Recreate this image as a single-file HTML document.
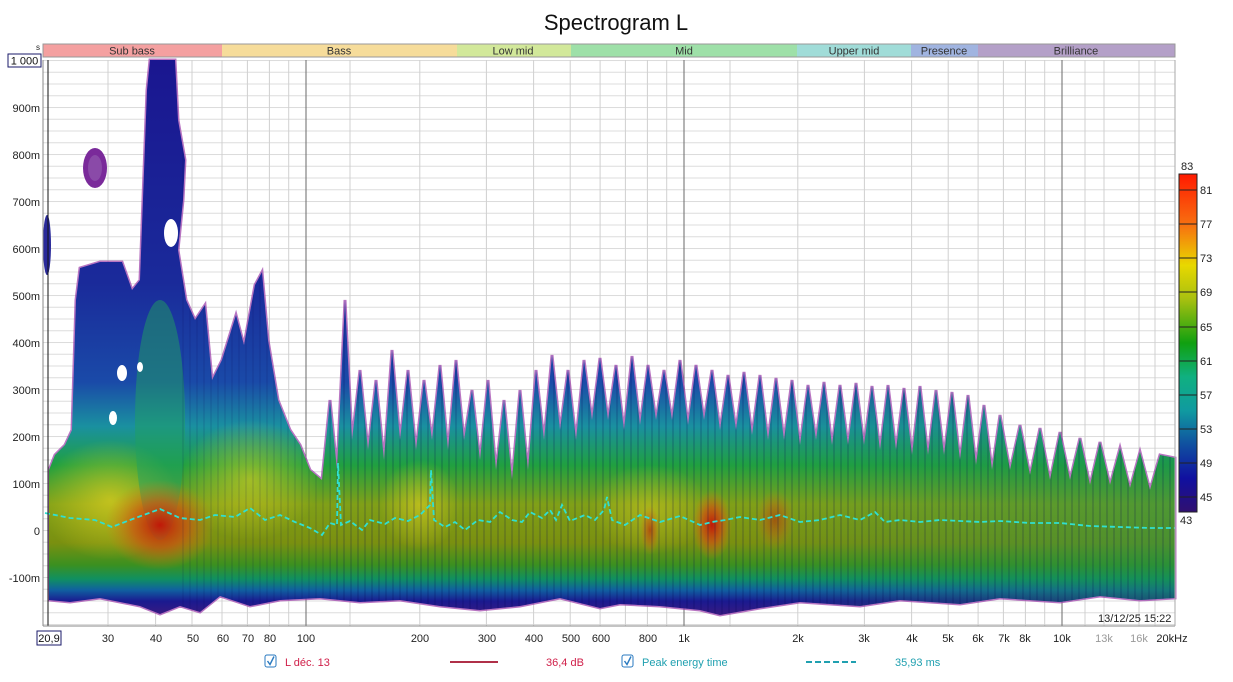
<!DOCTYPE html>
<html><head><meta charset="utf-8"><style>
html,body{margin:0;padding:0;background:#fff;}
body{width:1233px;height:677px;overflow:hidden;font-family:"Liberation Sans",sans-serif;}
</style></head><body>
<svg width="1233" height="677" viewBox="0 0 1233 677" xmlns="http://www.w3.org/2000/svg" font-family="Liberation Sans, sans-serif">
<defs>
<pattern id="hg" patternUnits="userSpaceOnUse" x="0" y="60" width="10" height="11.75"><line x1="0" y1="0.5" x2="10" y2="0.5" stroke="#dcdcdc" stroke-width="1"/></pattern>
<pattern id="st" patternUnits="userSpaceOnUse" width="7" height="10"><rect x="0" y="0" width="2" height="10" fill="rgba(0,0,80,0.15)"/></pattern>
<linearGradient id="vg" gradientUnits="userSpaceOnUse" x1="0" y1="60" x2="0" y2="615">
<stop offset="0" stop-color="#1a1690"/><stop offset="0.4" stop-color="#1a2a9a"/><stop offset="0.58" stop-color="#1a4aa8"/>
<stop offset="0.66" stop-color="#1a90a0"/><stop offset="0.73" stop-color="#20a040"/><stop offset="0.8" stop-color="#80a018"/>
<stop offset="0.87" stop-color="#7a9010"/><stop offset="0.91" stop-color="#3a9020"/><stop offset="0.935" stop-color="#109060"/>
<stop offset="0.955" stop-color="#1060a0"/><stop offset="0.975" stop-color="#1a1a90"/><stop offset="1" stop-color="#3a1a80"/></linearGradient>
<linearGradient id="rg" gradientUnits="userSpaceOnUse" x1="750" y1="0" x2="1175" y2="0">
<stop offset="0" stop-color="#1a9050" stop-opacity="0"/><stop offset="1" stop-color="#1a9050" stop-opacity="0.5"/></linearGradient>
<radialGradient id="red"><stop offset="0" stop-color="#c01808"/><stop offset="0.5" stop-color="#d05010" stop-opacity="0.7"/><stop offset="1" stop-color="#d08010" stop-opacity="0"/></radialGradient>
<radialGradient id="yel"><stop offset="0" stop-color="#e0d020"/><stop offset="1" stop-color="#e0d020" stop-opacity="0"/></radialGradient>
<linearGradient id="cb" x1="0" y1="0" x2="0" y2="1">
<stop offset="0" stop-color="#ff1a00"/><stop offset="0.15" stop-color="#f87010"/><stop offset="0.27" stop-color="#e8d800"/><stop offset="0.37" stop-color="#a8c010"/>
<stop offset="0.5" stop-color="#10a010"/><stop offset="0.6" stop-color="#10b080"/><stop offset="0.7" stop-color="#109aa0"/><stop offset="0.8" stop-color="#1050a0"/>
<stop offset="0.9" stop-color="#1010a0"/><stop offset="1" stop-color="#301070"/></linearGradient>
<clipPath id="body"><path id="bp" d="M49,600 L49,470 L55,455 L65,445 L72,430 L76,300 L80,268 L100,262 L122,262 L132,290 L140,280 L147,90 L150,60 L175,60 L178,120 L185,160 L183,200 L178,250 L186,300 L195,320 L205,305 L212,380 L222,360 L236,315 L244,345 L255,285 L262,272 L268,340 L278,400 L290,430 L300,445 L310,470 L322,480 L330,400 L337,470 L345,300 L352,440 L360,370 L368,450 L376,380 L384,460 L392,350 L400,440 L408,370 L416,450 L424,380 L432,440 L440,365 L448,450 L456,360 L464,440 L472,390 L480,460 L488,380 L496,470 L504,400 L512,480 L520,390 L528,470 L536,370 L544,440 L552,355 L560,430 L568,370 L576,440 L584,360 L592,420 L600,358 L608,420 L616,365 L624,430 L632,356 L640,425 L648,365 L656,420 L664,370 L672,420 L680,360 L688,425 L696,365 L704,420 L712,370 L720,430 L728,375 L736,430 L744,372 L752,435 L760,375 L768,440 L776,378 L784,440 L792,380 L800,445 L808,385 L816,440 L824,382 L832,445 L840,385 L848,445 L856,383 L864,445 L872,386 L880,450 L888,385 L896,450 L904,388 L912,455 L920,386 L928,455 L936,390 L944,455 L952,392 L960,460 L968,395 L976,465 L984,405 L992,470 L1000,415 L1010,470 L1020,425 L1030,475 L1040,428 L1050,480 L1060,432 L1070,480 L1080,438 L1090,485 L1100,442 L1110,485 L1120,448 L1130,488 L1140,452 L1150,490 L1160,455 L1175,458 L1175,598 L1140,600 L1100,596 L1060,602 L1000,598 L960,604 L900,600 L860,606 L800,602 L760,608 L720,615 L700,610 L660,606 L620,604 L600,608 L560,598 L520,606 L480,610 L440,606 L400,600 L360,602 L320,598 L280,600 L250,606 L220,596 L200,612 L180,606 L160,614 L140,606 L120,602 L100,598 L70,602 Z"/></clipPath>
</defs>

<text x="616" y="30" font-size="22" text-anchor="middle" fill="#111">Spectrogram L</text>

<g font-size="11" fill="#333" text-anchor="middle">
<rect x="43" y="44" width="179" height="13" fill="#f4a0a0"/><text x="132" y="54.5">Sub bass</text>
<rect x="222" y="44" width="235" height="13" fill="#f6dc9a"/><text x="339" y="54.5">Bass</text>
<rect x="457" y="44" width="114" height="13" fill="#d2e89a"/><text x="513" y="54.5">Low mid</text>
<rect x="571" y="44" width="226" height="13" fill="#9ee0a8"/><text x="684" y="54.5">Mid</text>
<rect x="797" y="44" width="114" height="13" fill="#a0dcd8"/><text x="854" y="54.5">Upper mid</text>
<rect x="911" y="44" width="67" height="13" fill="#a0b4e0"/><text x="944" y="54.5">Presence</text>
<rect x="978" y="44" width="197" height="13" fill="#b4a0c8"/><text x="1076" y="54.5">Brilliance</text>
<rect x="43" y="44" width="1132" height="13" fill="none" stroke="#999" stroke-width="1"/>
</g>

<rect x="43" y="60" width="1132" height="566" fill="#fff"/>
<rect x="43" y="60" width="1132" height="566" fill="url(#hg)"/>
<g stroke="#d0d0d0" stroke-width="1">
<line x1="108" y1="60" x2="108" y2="626"/><line x1="155.6" y1="60" x2="155.6" y2="626"/><line x1="192" y1="60" x2="192" y2="626"/><line x1="222" y1="60" x2="222" y2="626"/><line x1="247.4" y1="60" x2="247.4" y2="626"/><line x1="269.4" y1="60" x2="269.4" y2="626"/><line x1="288.7" y1="60" x2="288.7" y2="626"/>
<line x1="419.8" y1="60" x2="419.8" y2="626"/><line x1="486.4" y1="60" x2="486.4" y2="626"/><line x1="533.6" y1="60" x2="533.6" y2="626"/><line x1="570.2" y1="60" x2="570.2" y2="626"/><line x1="600.1" y1="60" x2="600.1" y2="626"/><line x1="625.4" y1="60" x2="625.4" y2="626"/><line x1="647.4" y1="60" x2="647.4" y2="626"/><line x1="666.7" y1="60" x2="666.7" y2="626"/>
<line x1="797.8" y1="60" x2="797.8" y2="626"/><line x1="864.4" y1="60" x2="864.4" y2="626"/><line x1="911.6" y1="60" x2="911.6" y2="626"/><line x1="948.2" y1="60" x2="948.2" y2="626"/><line x1="978.1" y1="60" x2="978.1" y2="626"/><line x1="1003.4" y1="60" x2="1003.4" y2="626"/><line x1="1025.4" y1="60" x2="1025.4" y2="626"/><line x1="1044.7" y1="60" x2="1044.7" y2="626"/>
<line x1="1104" y1="60" x2="1104" y2="626"/><line x1="1139" y1="60" x2="1139" y2="626"/><line x1="1155" y1="60" x2="1155" y2="626"/>
<line x1="350" y1="60" x2="350" y2="626"/><line x1="730" y1="60" x2="730" y2="626"/><line x1="1085" y1="60" x2="1085" y2="626"/>
</g>
<g stroke="#6a6a6a" stroke-width="1"><line x1="306" y1="60" x2="306" y2="626"/><line x1="684" y1="60" x2="684" y2="626"/><line x1="1062" y1="60" x2="1062" y2="626"/></g>

<use href="#bp" fill="none" stroke="#9a3aa8" stroke-width="3" opacity="0.7"/>
<g clip-path="url(#body)">
<rect x="43" y="60" width="1132" height="566" fill="url(#vg)"/>
<rect x="43" y="60" width="1132" height="566" fill="url(#rg)"/>
<ellipse cx="110" cy="500" rx="70" ry="60" fill="url(#yel)" opacity="0.7"/>
<ellipse cx="250" cy="480" rx="70" ry="60" fill="url(#yel)" opacity="0.6"/>
<ellipse cx="160" cy="420" rx="25" ry="120" fill="#20a060" opacity="0.5"/>
<ellipse cx="160" cy="525" rx="55" ry="45" fill="url(#red)"/>
<ellipse cx="420" cy="505" rx="40" ry="45" fill="url(#yel)" opacity="0.6"/>
<ellipse cx="650" cy="510" rx="60" ry="45" fill="url(#yel)" opacity="0.45"/>
<ellipse cx="712" cy="525" rx="20" ry="35" fill="url(#red)"/>
<ellipse cx="775" cy="520" rx="20" ry="30" fill="url(#red)" opacity="0.5"/>
<ellipse cx="650" cy="530" rx="10" ry="25" fill="url(#red)" opacity="0.6"/>
<rect x="330" y="60" width="845" height="566" fill="url(#st)"/>
<rect x="180" y="60" width="150" height="566" fill="url(#st)" opacity="0.6"/>
</g>
<g fill="#fff">
<ellipse cx="122" cy="373" rx="5" ry="8"/><ellipse cx="140" cy="367" rx="3" ry="5"/><ellipse cx="113" cy="418" rx="4" ry="7"/><ellipse cx="171" cy="233" rx="7" ry="14"/>
</g>
<ellipse cx="95" cy="168" rx="12" ry="20" fill="#7a2a9a"/>
<ellipse cx="95" cy="168" rx="7" ry="13" fill="#8a4aa8"/>
<ellipse cx="47" cy="245" rx="4" ry="30" fill="#2a2a9a"/>

<polyline fill="none" stroke="#30e0d0" stroke-width="1.8" stroke-dasharray="5,3" points="45,513 70,518 95,520 112,527 130,520 160,509 180,518 200,520 215,515 235,517 250,508 265,520 280,515 295,522 310,528 322,535 330,523 337,525 338,463 341,525 350,521 362,530 370,520 385,524 395,518 408,521 420,515 430,505 431,470 434,520 445,527 455,522 465,530 478,520 490,522 500,512 512,520 522,522 530,512 542,518 550,510 556,520 562,505 570,521 585,515 595,520 604,510 607,497 612,520 625,525 640,515 660,522 680,516 700,525 712,522 725,520 740,517 760,520 780,515 800,522 820,520 840,515 860,520 875,512 885,522 900,520 920,522 940,520 960,521 980,522 1000,521 1030,523 1060,523 1090,526 1120,527 1150,528 1175,528"/>

<line x1="43" y1="60" x2="43" y2="626" stroke="#888"/>
<line x1="48" y1="60" x2="48" y2="626" stroke="#111"/>
<line x1="43" y1="626" x2="1175" y2="626" stroke="#888"/>
<line x1="1175" y1="60" x2="1175" y2="626" stroke="#aaa"/>
<g font-size="11" fill="#222" text-anchor="end">
<text x="40" y="112">900m</text><text x="40" y="159">800m</text><text x="40" y="206">700m</text><text x="40" y="253">600m</text><text x="40" y="300">500m</text><text x="40" y="347">400m</text><text x="40" y="394">300m</text><text x="40" y="441">200m</text><text x="40" y="488">100m</text><text x="40" y="535">0</text><text x="40" y="582">-100m</text>
<text x="40" y="50" font-size="8">s</text>
</g>
<rect x="8" y="54" width="33" height="13" fill="#fff" stroke="#1a1a6a"/>
<text x="24.5" y="64.5" font-size="11" text-anchor="middle" fill="#111">1 000</text>
<rect x="37" y="631" width="24" height="14" fill="#fff" stroke="#1a1a6a"/>
<text x="49" y="642" font-size="11" text-anchor="middle" fill="#111">20,9</text>
<g font-size="11" fill="#222" text-anchor="middle">
<text x="108" y="642">30</text><text x="156" y="642">40</text><text x="193" y="642">50</text><text x="223" y="642">60</text><text x="248" y="642">70</text><text x="270" y="642">80</text><text x="306" y="642">100</text><text x="420" y="642">200</text><text x="487" y="642">300</text><text x="534" y="642">400</text><text x="571" y="642">500</text><text x="601" y="642">600</text><text x="648" y="642">800</text><text x="684" y="642">1k</text><text x="798" y="642">2k</text><text x="864" y="642">3k</text><text x="912" y="642">4k</text><text x="948" y="642">5k</text><text x="978" y="642">6k</text><text x="1004" y="642">7k</text><text x="1025" y="642">8k</text><text x="1062" y="642">10k</text><text x="1104" y="642" fill="#999">13k</text><text x="1139" y="642" fill="#999">16k</text><text x="1172" y="642">20kHz</text>
</g>
<text x="1098" y="622" font-size="11" fill="#222">13/12/25 15:22</text>

<rect x="1179" y="174" width="18" height="338" fill="url(#cb)" stroke="#222" stroke-width="1"/>
<g stroke="#222" stroke-width="1">
<line x1="1179" y1="190" x2="1197" y2="190"/><line x1="1179" y1="224" x2="1197" y2="224"/><line x1="1179" y1="258" x2="1197" y2="258"/><line x1="1179" y1="292" x2="1197" y2="292"/><line x1="1179" y1="327" x2="1197" y2="327"/><line x1="1179" y1="361" x2="1197" y2="361"/><line x1="1179" y1="395" x2="1197" y2="395"/><line x1="1179" y1="429" x2="1197" y2="429"/><line x1="1179" y1="463" x2="1197" y2="463"/><line x1="1179" y1="497" x2="1197" y2="497"/>
</g>
<g font-size="11" fill="#222">
<text x="1181" y="170">83</text><text x="1180" y="524">43</text>
<text x="1200" y="194">81</text><text x="1200" y="228">77</text><text x="1200" y="262">73</text><text x="1200" y="296">69</text><text x="1200" y="331">65</text><text x="1200" y="365">61</text><text x="1200" y="399">57</text><text x="1200" y="433">53</text><text x="1200" y="467">49</text><text x="1200" y="501">45</text>
</g>

<g font-size="11">
<rect x="265" y="655" width="11" height="12" rx="2" fill="#fff" stroke="#2a7ac0"/><path d="M267.5,661 L270,664.5 L274,656.5" fill="none" stroke="#2a7ac0" stroke-width="1.4"/>
<text x="285" y="666" fill="#d0204a">L déc. 13</text>
<line x1="450" y1="662" x2="498" y2="662" stroke="#b03048" stroke-width="2"/>
<text x="546" y="666" fill="#d0204a">36,4 dB</text>
<rect x="622" y="655" width="11" height="12" rx="2" fill="#fff" stroke="#2a7ac0"/><path d="M624.5,661 L627,664.5 L631,656.5" fill="none" stroke="#2a7ac0" stroke-width="1.4"/>
<text x="642" y="666" fill="#20a0b0">Peak energy time</text>
<line x1="806" y1="662" x2="856" y2="662" stroke="#20a0b0" stroke-width="2" stroke-dasharray="6,3"/>
<text x="895" y="666" fill="#20a0b0">35,93 ms</text>
</g>
</svg>
</body></html>
